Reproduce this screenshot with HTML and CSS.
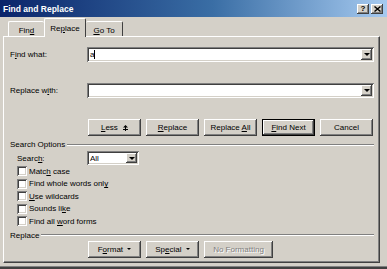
FILE: index.html
```html
<!DOCTYPE html>
<html lang="en">
<head>
    <meta charset="UTF-8">
    <meta name="viewport" content="width=device-width, initial-scale=1.0">
    <title>Find and Replace</title>
    <link rel="stylesheet" href="styles.css">
</head>
<body>
    <div class="dialog">
        <div class="titlebar">
            <span class="title">Find and Replace</span>
            <span class="caption-btns">
                <span class="cap-btn help">?</span>
                <span class="cap-btn">
                    <svg width="7" height="6" viewBox="0 0 7 6"><path d="M0.5 0.5 L6.5 5.5 M6.5 0.5 L0.5 5.5" stroke="#000" stroke-width="1.4"/></svg>
                </span>
            </span>
        </div>

        <div class="tabs">
            <div class="tab tab-find">Fin<u>d</u></div>
            <div class="tab tab-replace active">Re<u>p</u>lace</div>
            <div class="tab tab-goto"><u>G</u>o To</div>
        </div>

        <div class="panel">
            <div class="field-row">
                <span class="field-label">F<u>i</u>nd what:</span>
                <div class="combo grow">
                    <span class="combo-text">a<span class="caret"></span></span>
                    <span class="drop"><span class="arrow-down"></span></span>
                </div>
            </div>

            <div class="field-row second">
                <span class="field-label">Replace w<u>i</u>th:</span>
                <div class="combo grow">
                    <span class="combo-text"></span>
                    <span class="drop"><span class="arrow-down"></span></span>
                </div>
            </div>

            <div class="button-row main-buttons">
                <button class="btn"><u>L</u>ess
                    <svg class="less-icon" width="5" height="6" viewBox="0 0 5 6"><path d="M2.5 0 L5 2.5 L0 2.5 Z M2 2.5 H3 V6 H2 Z M0 4 H5 V5 H0 Z" fill="#000"/></svg>
                </button>
                <button class="btn"><u>R</u>eplace</button>
                <button class="btn">Replace <u>A</u>ll</button>
                <button class="btn default"><u>F</u>ind Next</button>
                <button class="btn">Cancel</button>
            </div>

            <div class="group-head search-head">Search Options</div>

            <div class="search-row">
                <span class="search-label">Searc<u>h</u>:</span>
                <div class="combo small">
                    <span class="combo-text">All</span>
                    <span class="drop"><span class="arrow-down"></span></span>
                </div>
            </div>

            <div class="checks">
                <div class="check"><span class="box"></span><span>Matc<u>h</u> case</span></div>
                <div class="check"><span class="box"></span><span>Find whole words onl<u>y</u></span></div>
                <div class="check"><span class="box"></span><span><u>U</u>se wildcards</span></div>
                <div class="check"><span class="box"></span><span>Sounds li<u>k</u>e</span></div>
                <div class="check"><span class="box"></span><span>Find all <u>w</u>ord forms</span></div>
            </div>

            <div class="group-head replace-head">Replace</div>

            <div class="button-row bottom-buttons">
                <button class="btn">F<u>o</u>rmat <span class="arrow-down small-arrow"></span></button>
                <button class="btn">Sp<u>e</u>cial <span class="arrow-down small-arrow"></span></button>
                <button class="btn wide disabled">No Formatting</button>
            </div>
        </div>
    </div>
</body>
</html>
```

FILE: styles.css
```css
* {
    box-sizing: border-box;
}
body {
    margin: 0;
    background-color: #d4d0c8;
    font-family: "Liberation Sans", Arial, sans-serif;
    font-size: 8px;
    color: #000;
}
u {
    text-decoration-thickness: 1px;
    text-underline-offset: 1px;
}
.dialog {
    width: 387px;
    height: 269px;
    background-color: #d4d0c8;
    box-shadow: inset 0 -2px #404040, inset 0 -3px #808080;
    overflow: hidden;
}

/* barra de titulo */
.titlebar {
    height: 17px;
    display: flex;
    align-items: center;
    justify-content: space-between;
    padding: 0 4px 0 3px;
    background: linear-gradient(to right, #0a246a 0%, #3a6ea5 55%, #a6caf0 100%);
}
.title {
    color: #fff;
    font-weight: bold;
    font-size: 8.5px;
}
.caption-btns {
    display: flex;
    gap: 2px;
}
.cap-btn {
    width: 12px;
    height: 10px;
    display: flex;
    align-items: center;
    justify-content: center;
    background-color: #d4d0c8;
    box-shadow: inset -1px -1px #404040, inset 1px 1px #fff, inset -2px -2px #808080;
    font-weight: bold;
    font-size: 8px;
    line-height: 1;
}

/* pestañas */
.tabs {
    display: flex;
    align-items: flex-end;
    height: 19px;
    padding-left: 8px;
}
.tab {
    height: 15px;
    padding-top: 4px;
    text-align: center;
    border-top: 1px solid #fff;
    border-left: 1px solid #fff;
    border-right: 1px solid #404040;
    border-radius: 2px 2px 0 0;
    background-color: #d4d0c8;
}
.tab-find {
    width: 36px;
    border-right: none;
}
.tab-replace {
    width: 42px;
}
.tab-goto {
    width: 37px;
    border-left: none;
}
.tab.active {
    height: 19px;
    padding-top: 5px;
    margin-bottom: -1px;
    position: relative;
    z-index: 1;
}

/* panel */
.panel {
    margin-left: 3px;
    width: 377px;
    height: 227px;
    padding: 10px 5px 0 6px;
    border-top: 1px solid #fff;
    border-left: 1px solid #fff;
    border-right: 1px solid #404040;
    border-bottom: 1px solid #404040;
    box-shadow: inset -1px -1px #808080;
}
.field-row {
    display: flex;
    align-items: center;
    height: 15px;
}
.field-row.second {
    margin-top: 21px;
}
.field-label {
    width: 77px;
}
.combo {
    height: 15px;
    display: flex;
    align-items: center;
    justify-content: space-between;
    padding: 2px;
    background-color: #fff;
    box-shadow: inset 1px 1px #808080, inset -1px -1px #fff, inset 2px 2px #404040, inset -2px -2px #d4d0c8;
}
.combo.grow {
    flex: 1;
}
.combo.small {
    width: 52px;
    height: 14px;
}
.combo-text {
    padding-left: 1px;
    display: flex;
    align-items: center;
}
.caret {
    display: inline-block;
    width: 1px;
    height: 9px;
    background-color: #000;
}
.drop {
    width: 11px;
    height: 100%;
    display: flex;
    align-items: center;
    justify-content: center;
    background-color: #d4d0c8;
    box-shadow: inset -1px -1px #404040, inset 1px 1px #fff, inset -2px -2px #808080;
}
.arrow-down {
    display: inline-block;
    width: 0;
    height: 0;
    border-left: 3px solid transparent;
    border-right: 3px solid transparent;
    border-top: 3px solid #000;
}
.small-arrow {
    border-left-width: 2px;
    border-right-width: 2px;
    border-top-width: 2px;
    margin-left: 2px;
    vertical-align: middle;
}

/* botones */
.button-row {
    display: flex;
    gap: 5px;
    margin-left: 78px;
}
.main-buttons {
    margin-top: 21px;
}
.btn {
    width: 53px;
    height: 17px;
    padding: 0;
    border: none;
    background-color: #d4d0c8;
    font-family: "Liberation Sans", Arial, sans-serif;
    font-size: 8px;
    color: #000;
    box-shadow: inset -1px -1px #404040, inset 1px 1px #fff, inset -2px -2px #808080;
}
.btn.default {
    box-shadow: inset 0 0 0 1px #000, inset -2px -2px #404040, inset 2px 2px #fff, inset -3px -3px #808080;
}
.btn.wide {
    width: 69px;
}
.btn.disabled {
    color: #808080;
    text-shadow: 1px 1px #fff;
}
.less-icon {
    margin-left: 3px;
    vertical-align: -1px;
}

/* grupos */
.group-head {
    display: flex;
    align-items: center;
    height: 9px;
}
.group-head::after {
    content: "";
    flex: 1;
    margin-left: 2px;
    border-top: 1px solid #808080;
    border-bottom: 1px solid #fff;
}
.search-head {
    margin-top: 4px;
}
.replace-head {
    margin-top: 3px;
}
.search-row {
    display: flex;
    align-items: center;
    margin-top: 2px;
    padding-left: 7px;
}
.search-label {
    width: 70px;
}
.checks {
    padding-left: 7px;
}
.check {
    height: 12.5px;
    display: flex;
    align-items: center;
}
.box {
    width: 10px;
    height: 10px;
    margin-right: 2px;
    background-color: #fff;
    box-shadow: inset 1px 1px #808080, inset -1px -1px #fff, inset 2px 2px #404040, inset -2px -2px #d4d0c8;
}
.bottom-buttons {
    margin-top: 1px;
}
```
